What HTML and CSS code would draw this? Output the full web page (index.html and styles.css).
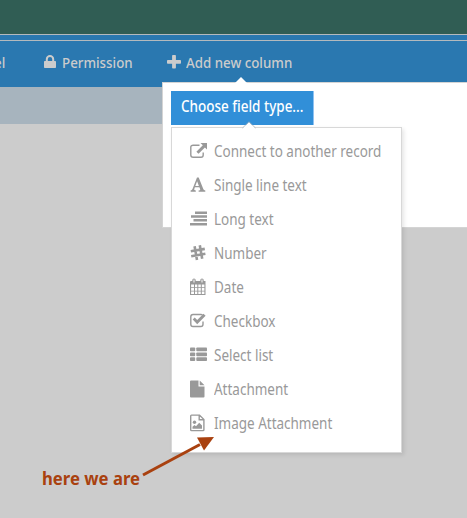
FILE: index.html
```html
<!DOCTYPE html>
<html lang="en">
<head>
<meta charset="utf-8">
<title>Add new column</title>
<link rel="stylesheet" href="styles.css">
</head>
<body>
<header class="banner"></header>
<div class="strip"></div>
<nav class="toolbar">
  <span class="tool tool-cut"><span class="label">el</span></span>
  <span class="tool tool-permission">
    <svg width="12" height="14" viewBox="0 0 12 14"><path d="M.8 6H1.8V4.200a4.200 4.200 0 0 1 8.400 0V6H11.200Q12 6 12 6.800V12.200Q12 13 11.200 13H.8Q0 13 0 12.200V6.800Q0 6 .8 6ZM3.800 6H8.200V4.200a2.200 2.200 0 0 0-4.400 0Z" fill-rule="evenodd"/></svg>
    <span class="label">Permission</span>
  </span>
  <span class="tool tool-add">
    <svg width="14" height="14" viewBox="0 0 14 14"><rect x="5.100" y="0" width="3.800" height="13.500" rx=".8"/><rect x="0" y="5" width="14" height="3.800" rx=".8"/></svg>
    <span class="label">Add new column</span>
  </span>
</nav>
<div class="subbar"></div>

<section class="popup">
  <svg class="pointer popup-pointer" width="14" height="8" viewBox="0 0 14 8"><path d="M1 7L7 1L13 7V8H1Z"/></svg>
  <div class="choose"><span class="label">Choose field type...</span></div>
  <div class="menu">
    <svg class="pointer menu-pointer" width="14" height="8" viewBox="0 0 14 8"><path d="M1 7L7 1L13 7V8H1Z"/><path class="edge" d="M.5 7L7 .7L13.500 7"/></svg>
    <ul>
      <li><svg viewBox="0 0 18 18"><path class="line" d="M9.500 3.200H3.200Q.8 3.200.8 5.200V13Q.8 15.200 3.200 15.200H11Q13.200 15.200 13.200 13V10.500"/><path d="M10.500 1H17V7.500L14.900 5.400L8.500 11.800L6.400 9.700L12.800 3.300Z"/></svg><span class="label">Connect to another record</span></li>
      <li><svg viewBox="0 0 18 18"><path fill-rule="evenodd" d="M7 1.500H8.700L13.400 13.200Q13.800 14.200 15.300 14.500V15.700H8.600V14.500Q10.700 14.400 10.200 13.200L9.400 11.200H4.900L4.200 13.200Q3.800 14.300 5.800 14.500V15.700H.6V14.500Q2 14.300 2.500 13ZM7.100 5.300L5.300 10H8.900Z"/></svg><span class="label">Single line text</span></li>
      <li><svg viewBox="0 0 18 18"><path d="M5 1.500H17V4H5ZM1 5.300H17V7.800H1ZM3.500 9.100H17V11.600H3.500ZM0 12.900H17V15.400H0Z"/></svg><span class="label">Long text</span></li>
      <li><svg viewBox="0 0 18 18"><path class="hash" d="M4.600 2.200L7 16M9.800 1.200L12.200 14.800M.8 7.300L14.800 4.900M1.200 12.300L15.400 9.800"/></svg><span class="label">Number</span></li>
      <li><svg viewBox="0 0 18 18"><path fill-rule="evenodd" d="M1 3H2.300V2Q2.300.500 4 .500T5.700 2V3H10.300V2Q10.300.500 12 .500T13.700 2V3H15.500V17H0V4Q0 3 1 3ZM1.100 6.500V9.200H4V6.500ZM5 6.500V9.200H7.300V6.500ZM8.300 6.500V9.200H10.800V6.500ZM11.800 6.500V9.200H14.400V6.500ZM1.100 10.100V12.700H4V10.100ZM5 10.100V12.700H7.300V10.100ZM8.300 10.100V12.700H10.800V10.100ZM11.800 10.100V12.700H14.400V10.100ZM1.100 13.600V16H4V13.600ZM5 13.600V16H7.300V13.600ZM8.300 13.600V16H10.800V13.600ZM11.800 13.600V16H14.400V13.600ZM3.500 1.600V4.600H4.500V1.600ZM11.500 1.600V4.600H12.500V1.600Z"/></svg><span class="label">Date</span></li>
      <li><svg viewBox="0 0 18 18"><path class="line" d="M12.500 2.900Q12 2.500 11 2.500H3Q.8 2.500.8 4.700V12.300Q.8 14.500 3 14.500H10.800Q13 14.500 13 12.300V9.500"/><path d="M2.700 7.500L4.700 5.500L7.200 8L13.500 1.800L15.600 3.800L7.200 12.200Z"/></svg><span class="label">Checkbox</span></li>
      <li><svg viewBox="0 0 18 18"><rect x="0" y="1.500" width="5.200" height="3.800" rx=".8"/><rect x="6.300" y="1.500" width="10.700" height="3.800" rx=".8"/><rect x="0" y="6.400" width="5.200" height="3.800" rx=".8"/><rect x="6.300" y="6.400" width="10.700" height="3.800" rx=".8"/><rect x="0" y="11.300" width="5.200" height="3.800" rx=".8"/><rect x="6.300" y="11.300" width="10.700" height="3.800" rx=".8"/></svg><span class="label">Select list</span></li>
      <li><svg viewBox="0 0 18 18"><path d="M1 .5H8.500V6.500H14.500V16.500Q14.500 17.500 13.500 17.500H1Q0 17.500 0 16.500V1.500Q0 .5 1 .5ZM9.700.5L14.500 5.300H9.700Z"/></svg><span class="label">Attachment</span></li>
      <li><svg viewBox="0 0 18 18"><path class="line" d="M1.500 1.100H9.500L13.900 5.500V15.700Q13.900 16.600 13 16.600H1.600Q.7 16.600.7 15.700V1.900Q.7 1.100 1.500 1.100ZM9.200 1.200V5.800H13.800"/><circle cx="4.500" cy="8.300" r="1.700"/><path d="M2.500 12.700L4.500 11L6 12.200L9.200 8.700L12 11.500V14.800H2.500Z"/></svg><span class="label">Image Attachment</span></li>
    </ul>
  </div>
</section>

<div class="note"><span class="label">here we are</span></div>
<svg class="arrow" width="80" height="46" viewBox="0 0 80 46"><path class="shaft" d="M3 42L60 11.500"/><path d="M57 4.500L74 4L64 17.500Z"/></svg>
</body>
</html>
```
FILE: styles.css
```css
* { box-sizing: border-box; }
body {
  margin: 0;
  height: 518px;
  overflow: hidden;
  position: relative;
  background: #ccc;
  font: 15.5px/20px "Noto Sans", "Open Sans", sans-serif;
}
svg { display: block; fill: currentColor; flex: none; }
.label { display: inline-block; white-space: nowrap; transform: scaleX(.87); transform-origin: 0 50%; }
.banner { height: 34px; background: #305d54; }
.strip { height: 7px; background: #2a78b0; border-top: 1px solid #b4babd; border-bottom: 1px solid #b4babd; }
.toolbar { height: 46px; background: #2a78b0; color: #ccc; display: grid; grid-template-columns: 44px 123px 1fr; padding-top: 11px; font-weight: 500; font-size: 15px; }
.toolbar .label { transform: scaleX(.888); }
.tool { display: flex; white-space: nowrap; }
.tool-cut .label { margin-left: -6px; }
.tool-permission { gap: 6px; }
.tool-add { gap: 5px; }
.tool svg { margin-top: 3px; }
.subbar { height: 37px; background: #a7b4be; }
.popup { position: absolute; left: 162px; top: 82px; width: 306px; height: 146px; background: #fff; border: 1px solid #d4d4d4; padding: 8px; }
.pointer { position: absolute; fill: #fff; }
.popup-pointer { left: 71px; top: -7px; }
.choose { width: 143px; height: 34px; background: #318fd8; color: #fff; padding: 5px 10px; font-weight: 500; border-right: 1px solid #8fc2f2; }
.menu { position: relative; margin-top: 2px; width: 231px; height: 326px; background: #fff; border: 1px solid #d8d8d8; box-shadow: 2px 2px 4px rgba(0,0,0,.1); }
.menu-pointer { left: 70px; top: -7px; }
.edge { fill: none; stroke: #9aa8b4; stroke-width: .7; }
ul { margin: 0; padding: 6px 0 0 18px; list-style: none; color: #999; }
li { display: flex; align-items: center; gap: 6px; height: 34px; }
li svg { width: 18px; height: 18px; }
.line { fill: none; stroke: currentColor; stroke-width: 1.4; }
.hash { fill: none; stroke: currentColor; stroke-width: 2.6; }
.note { position: absolute; left: 42px; top: 466px; color: #a9410f; font: 700 18px/24px "Noto Sans", sans-serif; }
.note .label { transform: scaleX(.928); }
.arrow { position: absolute; left: 140px; top: 433px; color: #a9410f; }
.shaft { stroke: currentColor; stroke-width: 3; }
```
